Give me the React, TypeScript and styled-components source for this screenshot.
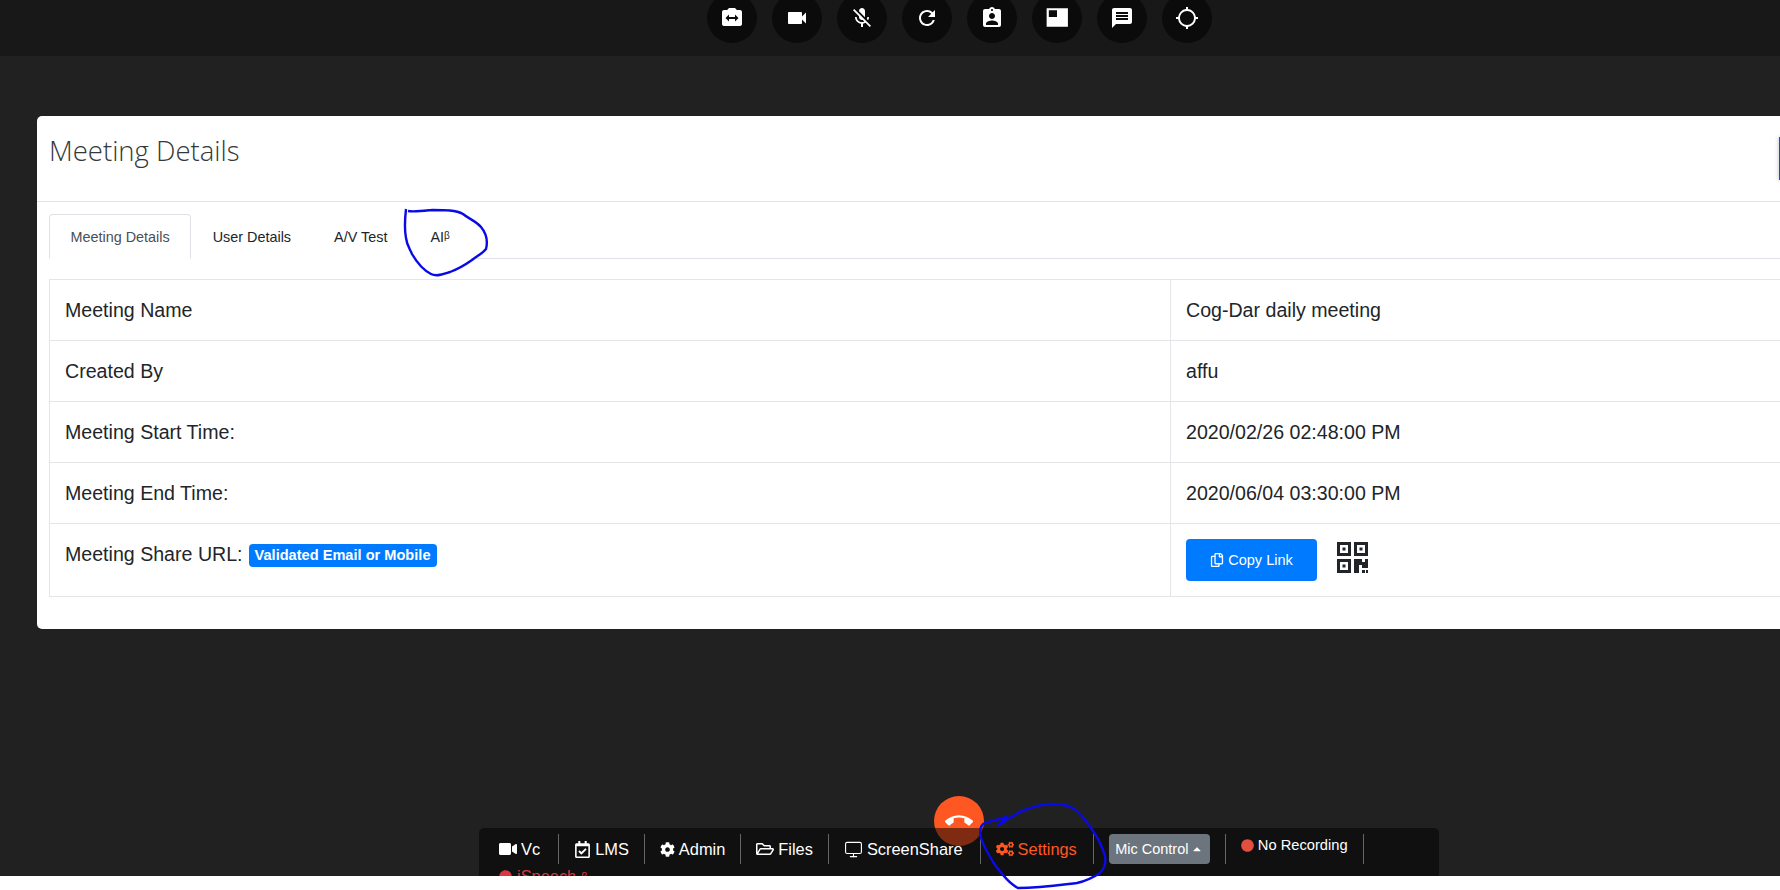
import styled, { createGlobalStyle } from 'styled-components';
import {
  MdSwitchCamera,
  MdVideocam,
  MdMicOff,
  MdRefresh,
  MdAssignmentInd,
  MdMessage,
  MdGpsNotFixed,
  MdCallEnd,
} from 'react-icons/md';
import {
  FaVideo,
  FaRegCalendarCheck,
  FaCog,
  FaRegFolderOpen,
  FaCogs,
  FaCircle,
  FaRegCopy,
  FaCaretUp,
} from 'react-icons/fa';
import { Monitor } from 'lucide-react';

const GlobalStyle = createGlobalStyle`
  html, body {
    margin: 0;
    height: 100%;
    overflow: hidden;
    background: #fff;
    font-family: "Liberation Sans", Arial, sans-serif;
  }
`;

const Page = styled.div`
  position: relative;
  width: 1780px;
  height: 890px;
  overflow: hidden;
  background: #fff;
`;

const TopBar = styled.div`
  display: flex;
  gap: 15px;
  height: 56px;
  padding-left: 707px;
  overflow: hidden;
  background: #181818;
`;

const RoundButton = styled.div`
  flex: none;
  display: flex;
  align-items: center;
  justify-content: center;
  width: 50px;
  height: 50px;
  margin-top: -7px;
  border-radius: 50%;
  background: #0b0b0b;
  color: #fff;
  font-size: 24px;
`;

const Stage = styled.div`
  display: flex;
  flex-direction: column;
  height: 820px;
  padding: 60px 0 0 37px;
  box-sizing: border-box;
  overflow: hidden;
  background: #212121;
`;

const Modal = styled.div`
  position: relative;
  flex: none;
  width: 1800px;
  height: 513px;
  border-radius: 5px;
  background: #fff;
`;

const ModalHeader = styled.div`
  height: 86px;
  padding: 17px 12px 0;
  box-sizing: border-box;
  border-bottom: 1px solid #e4e4e7;
`;

const Title = styled.h4`
  margin: 0;
  font-family: "Open Sans", sans-serif;
  font-size: 27.5px;
  font-weight: 300;
  line-height: 36px;
  color: #33383d;
`;

const SideHandle = styled.div`
  position: absolute;
  top: 21px;
  left: 1742px;
  width: 3px;
  height: 43px;
  background: #3b4690;
  box-shadow: 0 0 4px rgba(0, 0, 0, 0.3);
`;

const ModalBody = styled.div`
  padding: 12px 0 0 12px;
`;

const Tabs = styled.div`
  display: flex;
  height: 45px;
  box-sizing: border-box;
  border-bottom: 1px solid #dee2e6;
`;

const Tab = styled.div<{ $active?: boolean }>`
  height: 45px;
  padding: 0 20.5px;
  box-sizing: border-box;
  display: flex;
  align-items: center;
  font-size: 14.4px;
  color: ${(p) => (p.$active ? '#495057' : '#212529')};
  background: #fff;
  border: 1px solid ${(p) => (p.$active ? '#dee2e6' : 'transparent')};
  border-bottom-color: ${(p) => (p.$active ? '#fff' : 'transparent')};
  border-radius: 4px 4px 0 0;

  sup {
    font-size: 10px;
    line-height: 0;
    position: relative;
    top: -1px;
    vertical-align: super;
  }
`;

const DetailsTable = styled.table`
  table-layout: fixed;
  width: 1788px;
  margin-top: 20px;
  border-collapse: collapse;
  font-size: 19.6px;
  color: #212529;
`;

const Row = styled.tr<{ $tall?: boolean }>`
  height: ${(p) => (p.$tall ? '73px' : '61px')};
`;

const Cell = styled.td`
  padding: 0 15px;
  border: 1px solid #e3e5e9;
  vertical-align: middle;
`;

const LabelCol = styled.col`
  width: 1121px;
`;

const ShareCell = styled(Cell)`
  vertical-align: top;
  padding-top: 19px;
`;

const ActionCell = styled(Cell)`
  vertical-align: top;
  padding-top: 15px;
`;

const Badge = styled.span`
  display: inline-block;
  margin-left: 6px;
  padding: 3px 6px;
  border-radius: 4px;
  background: #007bff;
  color: #fff;
  font-size: 14.6px;
  font-weight: 700;
  line-height: 17px;
  vertical-align: 1px;
`;

const ShareActions = styled.div`
  display: flex;
  align-items: center;
  gap: 20px;
`;

const CopyButton = styled.div`
  display: flex;
  align-items: center;
  justify-content: center;
  gap: 4px;
  width: 131px;
  height: 42px;
  border-radius: 4px;
  background: #007bff;
  color: #fff;
  font-size: 14.5px;
`;

const QrCode = styled.svg`
  display: block;
  flex: none;
  width: 31px;
  height: 31px;
  margin-top: -6px;
  fill: #212529;
`;

const DockWrap = styled.div`
  position: relative;
  flex: none;
  width: 960px;
  margin: 199px 0 0 442px;
`;

const HangUp = styled.div`
  position: absolute;
  top: -32px;
  left: 455px;
  display: flex;
  align-items: center;
  justify-content: center;
  width: 50px;
  height: 50px;
  border-radius: 50%;
  background: #ff5722;
  color: #fff;
  font-size: 28px;
`;

const Dock = styled.div`
  position: relative;
  display: flex;
  flex-wrap: wrap;
  align-items: flex-start;
  padding: 6px 0 0 5px;
  border-radius: 5px;
  background: rgba(0, 0, 0, 0.5);
  color: #fff;
`;

const DockItem = styled.div<{ $color?: string; $raised?: boolean; $trail?: number }>`
  display: flex;
  align-items: ${(p) => (p.$raised ? 'flex-start' : 'center')};
  gap: 4px;
  height: 30px;
  padding: 0 ${(p) => p.$trail ?? 15}px 0 15px;
  border-right: 1px solid #666;
  font-size: ${(p) => (p.$raised ? '14.7px' : '16.4px')};
  line-height: ${(p) => (p.$raised ? '23px' : '28px')};
  color: ${(p) => p.$color ?? '#fff'};
  white-space: nowrap;

  svg {
    flex: none;
    margin-top: ${(p) => (p.$raised ? '5px' : '0')};
  }
`;

const MicButton = styled.div`
  display: flex;
  align-items: center;
  justify-content: center;
  gap: 3px;
  width: 101px;
  height: 30px;
  border-radius: 4px;
  background: #6c757d;
  color: #fff;
  font-size: 14.5px;
`;

const SpeechItem = styled.div`
  display: flex;
  align-items: center;
  gap: 5px;
  width: 100%;
  height: 24px;
  padding-left: 15px;
  font-size: 16.4px;
  color: #dc3545;

  sup {
    font-size: 11px;
    line-height: 0;
    vertical-align: super;
  }
`;

const Annotations = styled.svg`
  position: absolute;
  top: 0;
  left: 0;
  pointer-events: none;
`;

const PipIcon = () => (
  <svg width="24" height="24" viewBox="0 0 22 22" fill="#fff">
    <path d="M1.5 2h19.5v17H1.5z M3.5 4v6h7.5V4z" fillRule="evenodd" />
  </svg>
);

const roundIcons = [
  <MdSwitchCamera key="camera" />,
  <MdVideocam key="video" />,
  <MdMicOff key="mic" />,
  <MdRefresh key="refresh" />,
  <MdAssignmentInd key="assign" />,
  <PipIcon key="pip" />,
  <MdMessage key="message" />,
  <MdGpsNotFixed key="gps" />,
];

const rows = [
  { label: 'Meeting Name', value: 'Cog-Dar daily meeting' },
  { label: 'Created By', value: 'affu' },
  { label: 'Meeting Start Time:', value: '2020/02/26 02:48:00 PM' },
  { label: 'Meeting End Time:', value: '2020/06/04 03:30:00 PM' },
];

const dockItems = [
  { label: 'Vc', icon: <FaVideo size={18} />, trail: 18 },
  { label: 'LMS', icon: <FaRegCalendarCheck size={17} /> },
  { label: 'Admin', icon: <FaCog size={15} /> },
  { label: 'Files', icon: <FaRegFolderOpen size={18} /> },
  { label: 'ScreenShare', icon: <Monitor size={19} strokeWidth={1.4} />, trail: 17 },
];

function App() {
  return (
    <Page>
      <GlobalStyle />
      <TopBar>
        {roundIcons.map((icon) => (
          <RoundButton key={icon.key}>{icon}</RoundButton>
        ))}
      </TopBar>
      <Stage>
        <Modal>
          <ModalHeader>
            <Title>Meeting Details</Title>
          </ModalHeader>
          <SideHandle />
          <ModalBody>
            <Tabs>
              <Tab $active>Meeting Details</Tab>
              <Tab>User Details</Tab>
              <Tab>A/V Test</Tab>
              <Tab>
                AI<sup>β</sup>
              </Tab>
            </Tabs>
            <DetailsTable>
              <colgroup>
                <LabelCol />
                <col />
              </colgroup>
              <tbody>
                {rows.map((row) => (
                  <Row key={row.label}>
                    <Cell>{row.label}</Cell>
                    <Cell>{row.value}</Cell>
                  </Row>
                ))}
                <Row $tall>
                  <ShareCell>
                    Meeting Share URL:
                    <Badge>Validated Email or Mobile</Badge>
                  </ShareCell>
                  <ActionCell>
                    <ShareActions>
                      <CopyButton>
                        <FaRegCopy size={14} />
                        Copy Link
                      </CopyButton>
                      <QrCode viewBox="0 0 31 31">
                        <path
                          fillRule="evenodd"
                          d="M0 0h14v14H0z M3 3v8h8V3z M5.5 5.5h3v3h-3z M17 0h14v14H17z M20 3v8h8V3z M22.5 5.5h3v3h-3z M0 17h14v14H0z M3 20v8h8v-8z M5.5 22.5h3v3h-3z M17 17h8v3h3v-3h3v9h-6v-3h-3v8h-5z M25 28h3v3h-3z M29 28h2v3h-2z"
                        />
                      </QrCode>
                    </ShareActions>
                  </ActionCell>
                </Row>
              </tbody>
            </DetailsTable>
          </ModalBody>
        </Modal>
        <DockWrap>
          <HangUp>
            <MdCallEnd />
          </HangUp>
          <Dock>
            {dockItems.map((item) => (
              <DockItem key={item.label} $trail={item.trail}>
                {item.icon}
                {item.label}
              </DockItem>
            ))}
            <DockItem $color="#ff5722" $trail={16}>
              <FaCogs size={18} />
              Settings
            </DockItem>
            <DockItem>
              <MicButton>
                Mic Control
                <FaCaretUp size={12} />
              </MicButton>
            </DockItem>
            <DockItem $raised>
              <FaCircle size={13} color="#e04f3f" />
              No Recording
            </DockItem>
            <SpeechItem>
              <FaCircle size={13} />
              iSpeech <sup>β</sup>
            </SpeechItem>
          </Dock>
        </DockWrap>
      </Stage>
      <Annotations width="1780" height="890" viewBox="0 0 1780 890" fill="none" stroke="#0a0ae6" strokeWidth="2.4">
        <path d="M406 209C405 218 404 228 406 238C407 246 410 249 412 254C416 261 423 270 431 274C437 277 444 274 450 272C458 269 465 265 472 260C477 256 483 253 486 249C488 241 486 233 481 227C476 221 469 219 463 214C456 210 445 210 432 210C422 211 414 212 408 211" />
        <path d="M998 826C1002 821 1005 818 1007 817C998 819 988 822 983 824C979 828 980 834 981 838C984 848 990 856 993 862C1000 872 1010 884 1018 888C1040 888 1060 885 1077 883C1086 881 1094 877 1100 873C1105 868 1106 862 1105 856C1102 846 1098 838 1093 831C1087 822 1080 812 1073 808C1065 804 1058 804 1050 804C1042 804 1034 807 1027 809C1016 813 1006 820 998 826" />
      </Annotations>
    </Page>
  );
}

export default App;
